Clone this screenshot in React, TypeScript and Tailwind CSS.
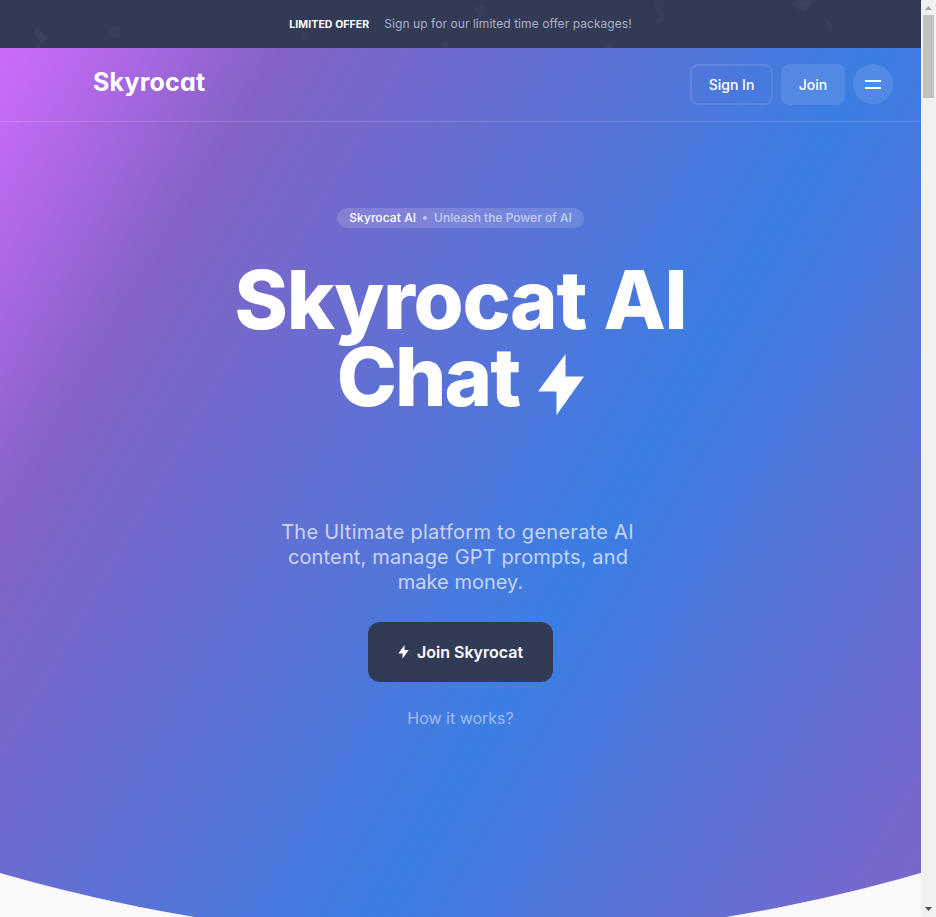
import React from "react";

function Bolt({ className }: { className: string }) {
  return (
    <svg viewBox="0 0 46 62" className={className} fill="currentColor">
      <path d="M27.5 0 L0 37.5 H18.5 V61 L46 22.5 H27.5 Z" />
    </svg>
  );
}

function Confetti() {
  return (
    <svg className="absolute inset-0 h-12 w-[921px] blur-[1px]" viewBox="0 0 921 48" fill="#ffffff" fillOpacity="0.045">
      <path d="M32 31 l5 -3 l11 9 l-6 7 Z" />
      <path d="M34 48 l5 -4 l4 4 Z" />
      <circle cx="115" cy="32" r="6" fillOpacity="0.025" />
      <path d="M791 5 l6 -7 h17 l-5 11 l-6 2 Z" />
      <path d="M824 18 l10 6 l-6 7 Z" fillOpacity="0.03" />
      <path d="M654 0 h12 l-4 10 l3 10 l-9 4 l2 -12 Z" fillOpacity="0.025" />
      <path d="M474 8 l10 -3 l4 6 l-9 7 Z" fillOpacity="0.025" />
      <path d="M442 48 l2 -8 l5 8 Z" />
      <path d="M604 48 l5 -6 l6 6 Z" fillOpacity="0.03" />
      <path d="M302 32 l10 3 l-3 5 l-8 -2 Z" fillOpacity="0.02" />
    </svg>
  );
}

function Scrollbar() {
  return (
    <div className="flex h-full w-[15px] flex-col items-center justify-between bg-[#f1f1f1]">
      <div className="flex flex-col items-center">
        <svg className="h-[15px] w-[15px]" viewBox="0 0 15 15"><path d="M4 10 L7.5 6 L11 10 Z" fill="#a3a3a3" /></svg>
        <div className="h-[83px] w-[11px] bg-[#c1c1c1]" />
      </div>
      <svg className="h-[15px] w-[15px]" viewBox="0 0 15 15"><path d="M4 5 L7.5 9 L11 5 Z" fill="#505050" /></svg>
    </div>
  );
}

export default function App() {
  return (
    <div className="flex h-[917px] w-[936px] overflow-hidden bg-[#fafafc] font-['Inter',sans-serif] text-white">
      <div className="flex h-full w-[921px] flex-col">
        <div className="relative flex h-12 shrink-0 items-center justify-center gap-[15px] overflow-hidden bg-[#323b56]">
          <Confetti />
          <span className="mt-px text-[10.5px] font-bold tracking-[0.1px]">LIMITED OFFER</span>
          <span className="text-xs tracking-[0.06px] text-[#abb0c4]">Sign up for our limited time offer packages!</span>
        </div>
        <div className="flex h-[891px] shrink-0 flex-col [clip-path:circle(1650px_at_460.5px_-759.5px)] bg-[linear-gradient(120deg,#cc6bfb_0px,#ab67e3_118px,#8363c6_246px,#3b7ee3_762px,#8363c6_1265px)]">
          <header className="flex h-[74px] shrink-0 items-start justify-between border-b border-white/15 pl-[93px] pr-7 pt-4">
            <span className="text-[25px] font-bold leading-9 tracking-[0.2px] [font-feature-settings:'cv11']">Skyrocat</span>
            <div className="flex gap-2 text-sm font-medium">
              <button className="h-[41px] w-[83px] rounded-lg border-2 border-white/10">Sign In</button>
              <button className="h-[41px] w-16 rounded-lg bg-white/10">Join</button>
              <button className="flex h-10 w-10 flex-col items-center justify-center gap-[5px] rounded-full bg-white/10">
                <span className="h-0.5 w-4 bg-white" />
                <span className="h-0.5 w-4 bg-white" />
              </button>
            </div>
          </header>
          <main className="flex flex-col items-center pt-[86px]">
            <div className="flex h-5 w-[247px] items-center justify-center gap-[7px] rounded-full bg-white/15 text-xs font-medium">
              <span className="tracking-[0.08px]">Skyrocat AI</span>
              <span className="h-1 w-1 rounded-full bg-white/50" />
              <span className="text-white/60">Unleash the Power of AI</span>
            </div>
            <h1 className="mt-[34px] flex flex-col items-center text-[81px] font-extrabold leading-[77px] tracking-[-1.9px]">
              <span className="whitespace-nowrap tracking-[-1.3px] [word-spacing:1px]">Skyrocat AI</span>
              <span className="flex items-center gap-[19px]">Chat <Bolt className="mt-[14px] h-[62px] w-[46px]" /></span>
            </h1>
            <p className="mt-[104px] text-center text-xl leading-[25px] text-white/70">
              <span className="block pr-[6px] tracking-[0.27px]">The Ultimate platform to generate AI</span>
              <span className="block pr-[5px] tracking-[0.15px]">content, manage GPT prompts, and</span>
              <span className="block">make money.</span>
            </p>
            <button className="mt-[27px] flex h-[60px] w-[185px] items-center justify-center gap-2 rounded-xl bg-[#323b56] text-base font-semibold">
              <Bolt className="h-[14px] w-[11px]" />
              <span>Join Skyrocat</span>
            </button>
            <a className="mt-6 text-base leading-6 text-white/50">How it works?</a>
          </main>
        </div>
      </div>
      <Scrollbar />
    </div>
  );
}
